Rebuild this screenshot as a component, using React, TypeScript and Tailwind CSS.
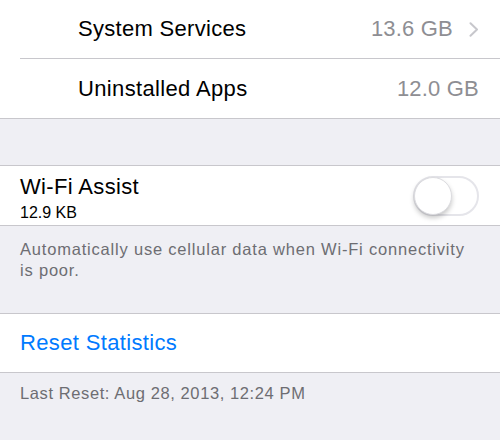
import React from "react";

function Chevron() {
  return (
    <svg width="10" height="15" viewBox="0 0 10 15" fill="none">
      <path d="M1.5 1.2 L8 7.5 L1.5 13.8" stroke="#c7c7cc" strokeWidth="2" strokeLinecap="round" strokeLinejoin="round" />
    </svg>
  );
}

function Toggle() {
  return (
    <div className="w-[66px] h-[40px] rounded-full border-2 border-[#e5e5ea] bg-white flex items-center">
      <div className="w-[38px] h-[38px] -ml-[1px] rounded-full bg-white border border-[#dcdce0] shadow-[0_3px_5px_rgba(0,0,0,0.22)]" />
    </div>
  );
}

export default function App() {
  return (
    <div
      className="w-[500px] h-[440px] bg-[#efeff4] overflow-hidden text-black"
      style={{ fontFamily: '"Liberation Sans", Arial, sans-serif' }}
    >
      <div className="bg-white border-b border-[#c8c7cc]">
        <div className="h-[58px] pl-[78px] pr-[21px] flex items-center justify-between">
          <span className="text-[22px] leading-[26px] tracking-[0.3px]">System Services</span>
          <div className="flex items-center gap-[16px]">
            <span className="text-[22px] leading-[26px] tracking-[0.2px] text-[#8e8e93]">13.6 GB</span>
            <Chevron />
          </div>
        </div>
        <div className="ml-[20px] h-px bg-[#c8c7cc]" />
        <div className="h-[59px] pl-[78px] pr-[21px] flex items-center justify-between">
          <span className="text-[22px] leading-[26px] tracking-[0.35px]">Uninstalled Apps</span>
          <span className="text-[22px] leading-[26px] tracking-[0.2px] text-[#8e8e93]">12.0 GB</span>
        </div>
      </div>

      <div className="h-[46px]" />

      <div className="bg-white border-y border-[#c8c7cc] h-[61px] pl-[20px] pr-[21px] flex items-center justify-between">
        <div className="flex flex-col pt-[6px]">
          <span className="text-[22px] leading-[26px] tracking-[0.35px]">Wi-Fi Assist</span>
          <span className="text-[16px] leading-[20px] mt-[3px]">12.9 KB</span>
        </div>
        <Toggle />
      </div>

      <div className="h-[87px] px-[20px] pt-[13px]">
        <p className="text-[16.5px] leading-[21px] tracking-[0.8px] text-[#6d6d72] w-[450px]">
          Automatically use cellular data when Wi-Fi connectivity is poor.
        </p>
      </div>

      <div className="bg-white border-y border-[#c8c7cc] h-[60px] px-[20px] flex items-center">
        <span className="text-[22px] leading-[26px] tracking-[0.35px] text-[#007aff]">Reset Statistics</span>
      </div>

      <div className="px-[20px] pt-[10px]">
        <p className="text-[16.5px] leading-[21px] tracking-[0.6px] text-[#6d6d72]">Last Reset: Aug 28, 2013, 12:24 PM</p>
      </div>
    </div>
  );
}
